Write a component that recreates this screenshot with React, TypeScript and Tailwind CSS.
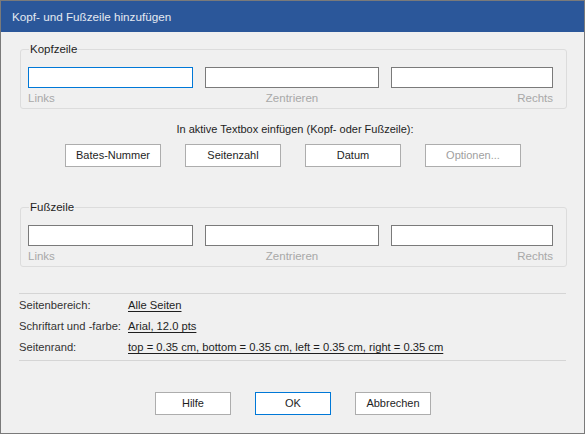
import React from "react";

const font = { fontFamily: '"Liberation Sans", Arial, sans-serif' };

const TextRow = ({ focusFirst }: { focusFirst?: boolean }) => (
  <div>
    <div className="flex gap-[12px]">
      <div
        className={`h-[21px] w-[165px] bg-white border ${
          focusFirst ? "border-[#0078d7]" : "border-[#7a7a7a]"
        }`}
      />
      <div className="h-[21px] w-[174px] bg-white border border-[#7a7a7a]" />
      <div className="h-[21px] w-[162px] bg-white border border-[#7a7a7a]" />
    </div>
    <div className="flex w-[525px] justify-between text-[11.5px] leading-[14px] text-[#a8a8a8] mt-[3px]">
      <span>Links</span>
      <span className="pl-[12px]">Zentrieren</span>
      <span>Rechts</span>
    </div>
  </div>
);

const Group = ({ title, focusFirst }: { title: string; focusFirst?: boolean }) => (
  <fieldset className="mx-[19px] w-[547px] border border-[#dcdcdc] rounded-[3px] pl-[7px] pb-[3px]">
    <legend className="ml-[1px] px-[1px] text-[11.5px] leading-[16px] text-[#1e1e1e]">
      {title}
    </legend>
    <div className="pt-[10px]">
      <TextRow focusFirst={focusFirst} />
    </div>
  </fieldset>
);

const Btn = ({
  label,
  w,
  disabled,
  primary,
}: {
  label: string;
  w: string;
  disabled?: boolean;
  primary?: boolean;
}) => (
  <div
    className={`${w} h-[23px] flex items-center justify-center bg-white border text-[11px] ${
      primary ? "border-[#0078d7]" : "border-[#adadad]"
    } ${disabled ? "text-[#a0a0a0]" : "text-[#1e1e1e]"}`}
  >
    {label}
  </div>
);

export default function App() {
  return (
    <div
      className="w-[585px] h-[434px] border border-[#7a7a7a] bg-[#f0f0f0] flex flex-col"
      style={font}
    >
      <div className="h-[31px] shrink-0 bg-[#2b579a] flex items-center pl-[11px] text-[11.7px] text-[#e4e9f1]">
        Kopf- und Fußzeile hinzufügen
      </div>

      <div className="mt-[9px]">
        <Group title="Kopfzeile" focusFirst />
      </div>

      <div className="mt-[13px] text-center text-[11px] leading-[14px] text-[#1e1e1e] pl-[5px]">
        In aktive Textbox einfügen (Kopf- oder Fußzeile):
      </div>

      <div className="mt-[8px] flex gap-[24px] pl-[64px]">
        <Btn label="Bates-Nummer" w="w-[96px]" />
        <Btn label="Seitenzahl" w="w-[96px]" />
        <Btn label="Datum" w="w-[96px]" />
        <Btn label="Optionen..." w="w-[96px]" disabled />
      </div>

      <div className="mt-[32px]">
        <Group title="Fußzeile" />
      </div>

      <div className="mx-[18px] mt-[26px] border-t border-[#d5d5d5]" />

      <div className="mx-[18px] pt-[4px] text-[11.2px] text-[#1e1e1e] flex flex-col gap-[6px]">
        {[
          ["Seitenbereich:", "Alle Seiten"],
          ["Schriftart und -farbe:", "Arial, 12.0 pts"],
          ["Seitenrand:", "top = 0.35 cm, bottom = 0.35 cm, left = 0.35 cm, right = 0.35 cm"],
        ].map(([k, v]) => (
          <div key={k} className="flex leading-[15px] whitespace-nowrap">
            <span className="w-[109px] shrink-0 text-[#333333]">{k}</span>
            <span className="underline underline-offset-2">{v}</span>
          </div>
        ))}
      </div>

      <div className="mx-[18px] mt-[5px] border-t border-[#d5d5d5]" />

      <div className="mt-[31px] flex gap-[24px] pl-[154px]">
        <Btn label="Hilfe" w="w-[76px]" />
        <Btn label="OK" w="w-[76px]" primary />
        <Btn label="Abbrechen" w="w-[76px]" />
      </div>
    </div>
  );
}
